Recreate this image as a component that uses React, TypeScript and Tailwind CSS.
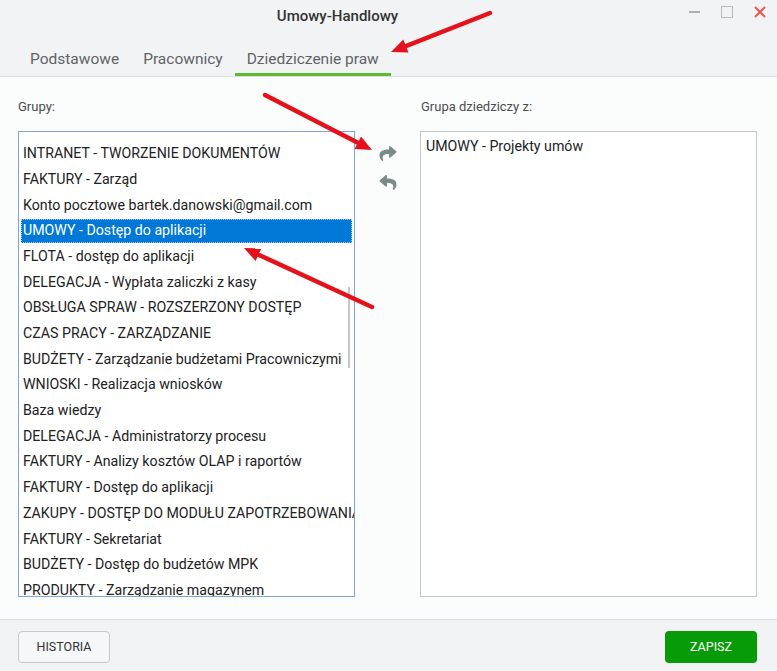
import React, { useState } from 'react';
import { FaShare, FaReply } from 'react-icons/fa';

const groups = [
  'INTRANET - TWORZENIE DOKUMENTÓW',
  'FAKTURY - Zarząd',
  'Konto pocztowe bartek.danowski@gmail.com',
  'UMOWY - Dostęp do aplikacji',
  'FLOTA - dostęp do aplikacji',
  'DELEGACJA - Wypłata zaliczki z kasy',
  'OBSŁUGA SPRAW - ROZSZERZONY DOSTĘP',
  'CZAS PRACY - ZARZĄDZANIE',
  'BUDŻETY - Zarządzanie budżetami Pracowniczymi',
  'WNIOSKI - Realizacja wniosków',
  'Baza wiedzy',
  'DELEGACJA - Administratorzy procesu',
  'FAKTURY - Analizy kosztów OLAP i raportów',
  'FAKTURY - Dostęp do aplikacji',
  'ZAKUPY - DOSTĘP DO MODUŁU ZAPOTRZEBOWANIA',
  'FAKTURY - Sekretariat',
  'BUDŻETY - Dostęp do budżetów MPK',
  'PRODUKTY - Zarządzanie magazynem',
];

const tabs = ['Podstawowe', 'Pracownicy', 'Dziedziczenie praw'];

// red annotation arrows drawn over the dialog
const Annotations = () => (
  <svg className="absolute inset-0 pointer-events-none" width="777" height="671">
    <g stroke="#e5121b" strokeWidth="4.5" strokeLinecap="round" fill="#e5121b">
      <line x1="490" y1="13" x2="405.9" y2="46.1" />
      <polygon stroke="none" points="391,52 403.3,39.6 408.5,52.6" />
      <line x1="265" y1="95" x2="357.8" y2="142.7" />
      <polygon stroke="none" points="372,150 354.6,148.9 361,136.5" />
      <line x1="372" y1="307" x2="258.5" y2="254.7" />
      <polygon stroke="none" points="244,248 261.4,248.3 255.6,261.1" />
    </g>
  </svg>
);

export default function App() {
  const [activeTab, setActiveTab] = useState(2);
  const [selected, setSelected] = useState(3);

  return (
    <div className="relative w-[777px] h-[671px] flex flex-col bg-[#fbfcfc] font-['Roboto',sans-serif] overflow-hidden">
      {/* header with title and tabs */}
      <div className="bg-[#f1f3f4] border-b border-[#dcdfe1] h-[77px] flex flex-col">
        <div className="relative h-[33px] flex items-center">
          <div className="w-[675px] flex justify-center">
            <span className="text-[15px] font-medium text-[#333]">Umowy-Handlowy</span>
          </div>
          <div className="absolute right-[11px] top-[6px] flex items-center gap-[21px]">
            <div className="w-[11px] h-[12px] flex items-center">
              <div className="w-[11px] h-[2px] bg-[#a9b3b6]" />
            </div>
            <div className="w-[12px] h-[12px] border border-[#b4bcc0]" />
            <svg width="12" height="12" viewBox="0 0 12 12">
              <path d="M1 1L11 11M11 1L1 11" stroke="#ef5350" strokeWidth="2" />
            </svg>
          </div>
        </div>
        <div className="flex pl-[18px] h-[44px]">
          {tabs.map((t, i) => (
            <button
              key={t}
              onClick={() => setActiveTab(i)}
              className={`px-[12px] pt-[13px] text-[15.5px] text-[#5f6366] border-b-[3px] ${
                i === activeTab ? 'border-[#5cba2e]' : 'border-transparent'
              }`}
            >
              {t}
            </button>
          ))}
        </div>
      </div>

      {/* two-column group editor */}
      <div className="flex-1 px-[18px] pt-[22px] flex">
        <div className="w-[337px] flex flex-col">
          <div className="text-[13px] leading-[16px] text-[#4a4d4f] h-[16px]">Grupy:</div>
          <div className="relative mt-[16px] h-[466px] border border-[#7ea7d8] bg-white overflow-hidden pt-[9px]">
            {groups.map((g, i) => (
              <div key={g} className="h-[25.7px] px-[2px] flex items-center" onClick={() => setSelected(i)}>
                <div
                  className={`w-full h-[24px] flex items-center pl-[2px] whitespace-nowrap text-[14.2px] ${
                    i === selected
                      ? 'bg-[#0078d7] text-white outline-1 outline-dotted outline-[#a8cdf0] -outline-offset-1'
                      : 'text-[#222]'
                  }`}
                >
                  {g}
                </div>
              </div>
            ))}
            <div className="absolute right-[4px] top-[155px] w-[2px] h-[81px] bg-[#c4c6c8]" />
          </div>
        </div>

        <div className="w-[65px] pt-[46px] flex flex-col items-center gap-[12px]">
          <FaShare className="text-[#7b8989] w-[20px] h-[17px] ml-px" />
          <FaReply className="text-[#7b8989] w-[20px] h-[17px] ml-px" />
        </div>

        <div className="w-[337px] flex flex-col">
          <div className="text-[13px] leading-[16px] text-[#4a4d4f] h-[16px] pl-px">Grupa dziedziczy z:</div>
          <div className="mt-[16px] h-[466px] border border-[#c3c7ca] bg-white pt-[5px] px-[5px]">
            <div className="text-[14.2px] text-[#222] h-[20px] flex items-center">UMOWY - Projekty umów</div>
          </div>
        </div>
      </div>

      {/* footer buttons */}
      <div className="h-[52px] bg-[#f1f3f4] border-t border-[#dcdfe1] pl-[18px] pr-[20px] pt-[11px] flex justify-between">
        <button className="w-[92px] h-[32px] rounded-[4px] border border-[#c5c9cc] bg-[#f6f7f8] text-[12.5px] text-[#333]">
          HISTORIA
        </button>
        <button className="w-[92px] h-[32px] rounded-[4px] bg-[#079c07] text-[12.5px] text-white">
          ZAPISZ
        </button>
      </div>

      <Annotations />
    </div>
  );
}
